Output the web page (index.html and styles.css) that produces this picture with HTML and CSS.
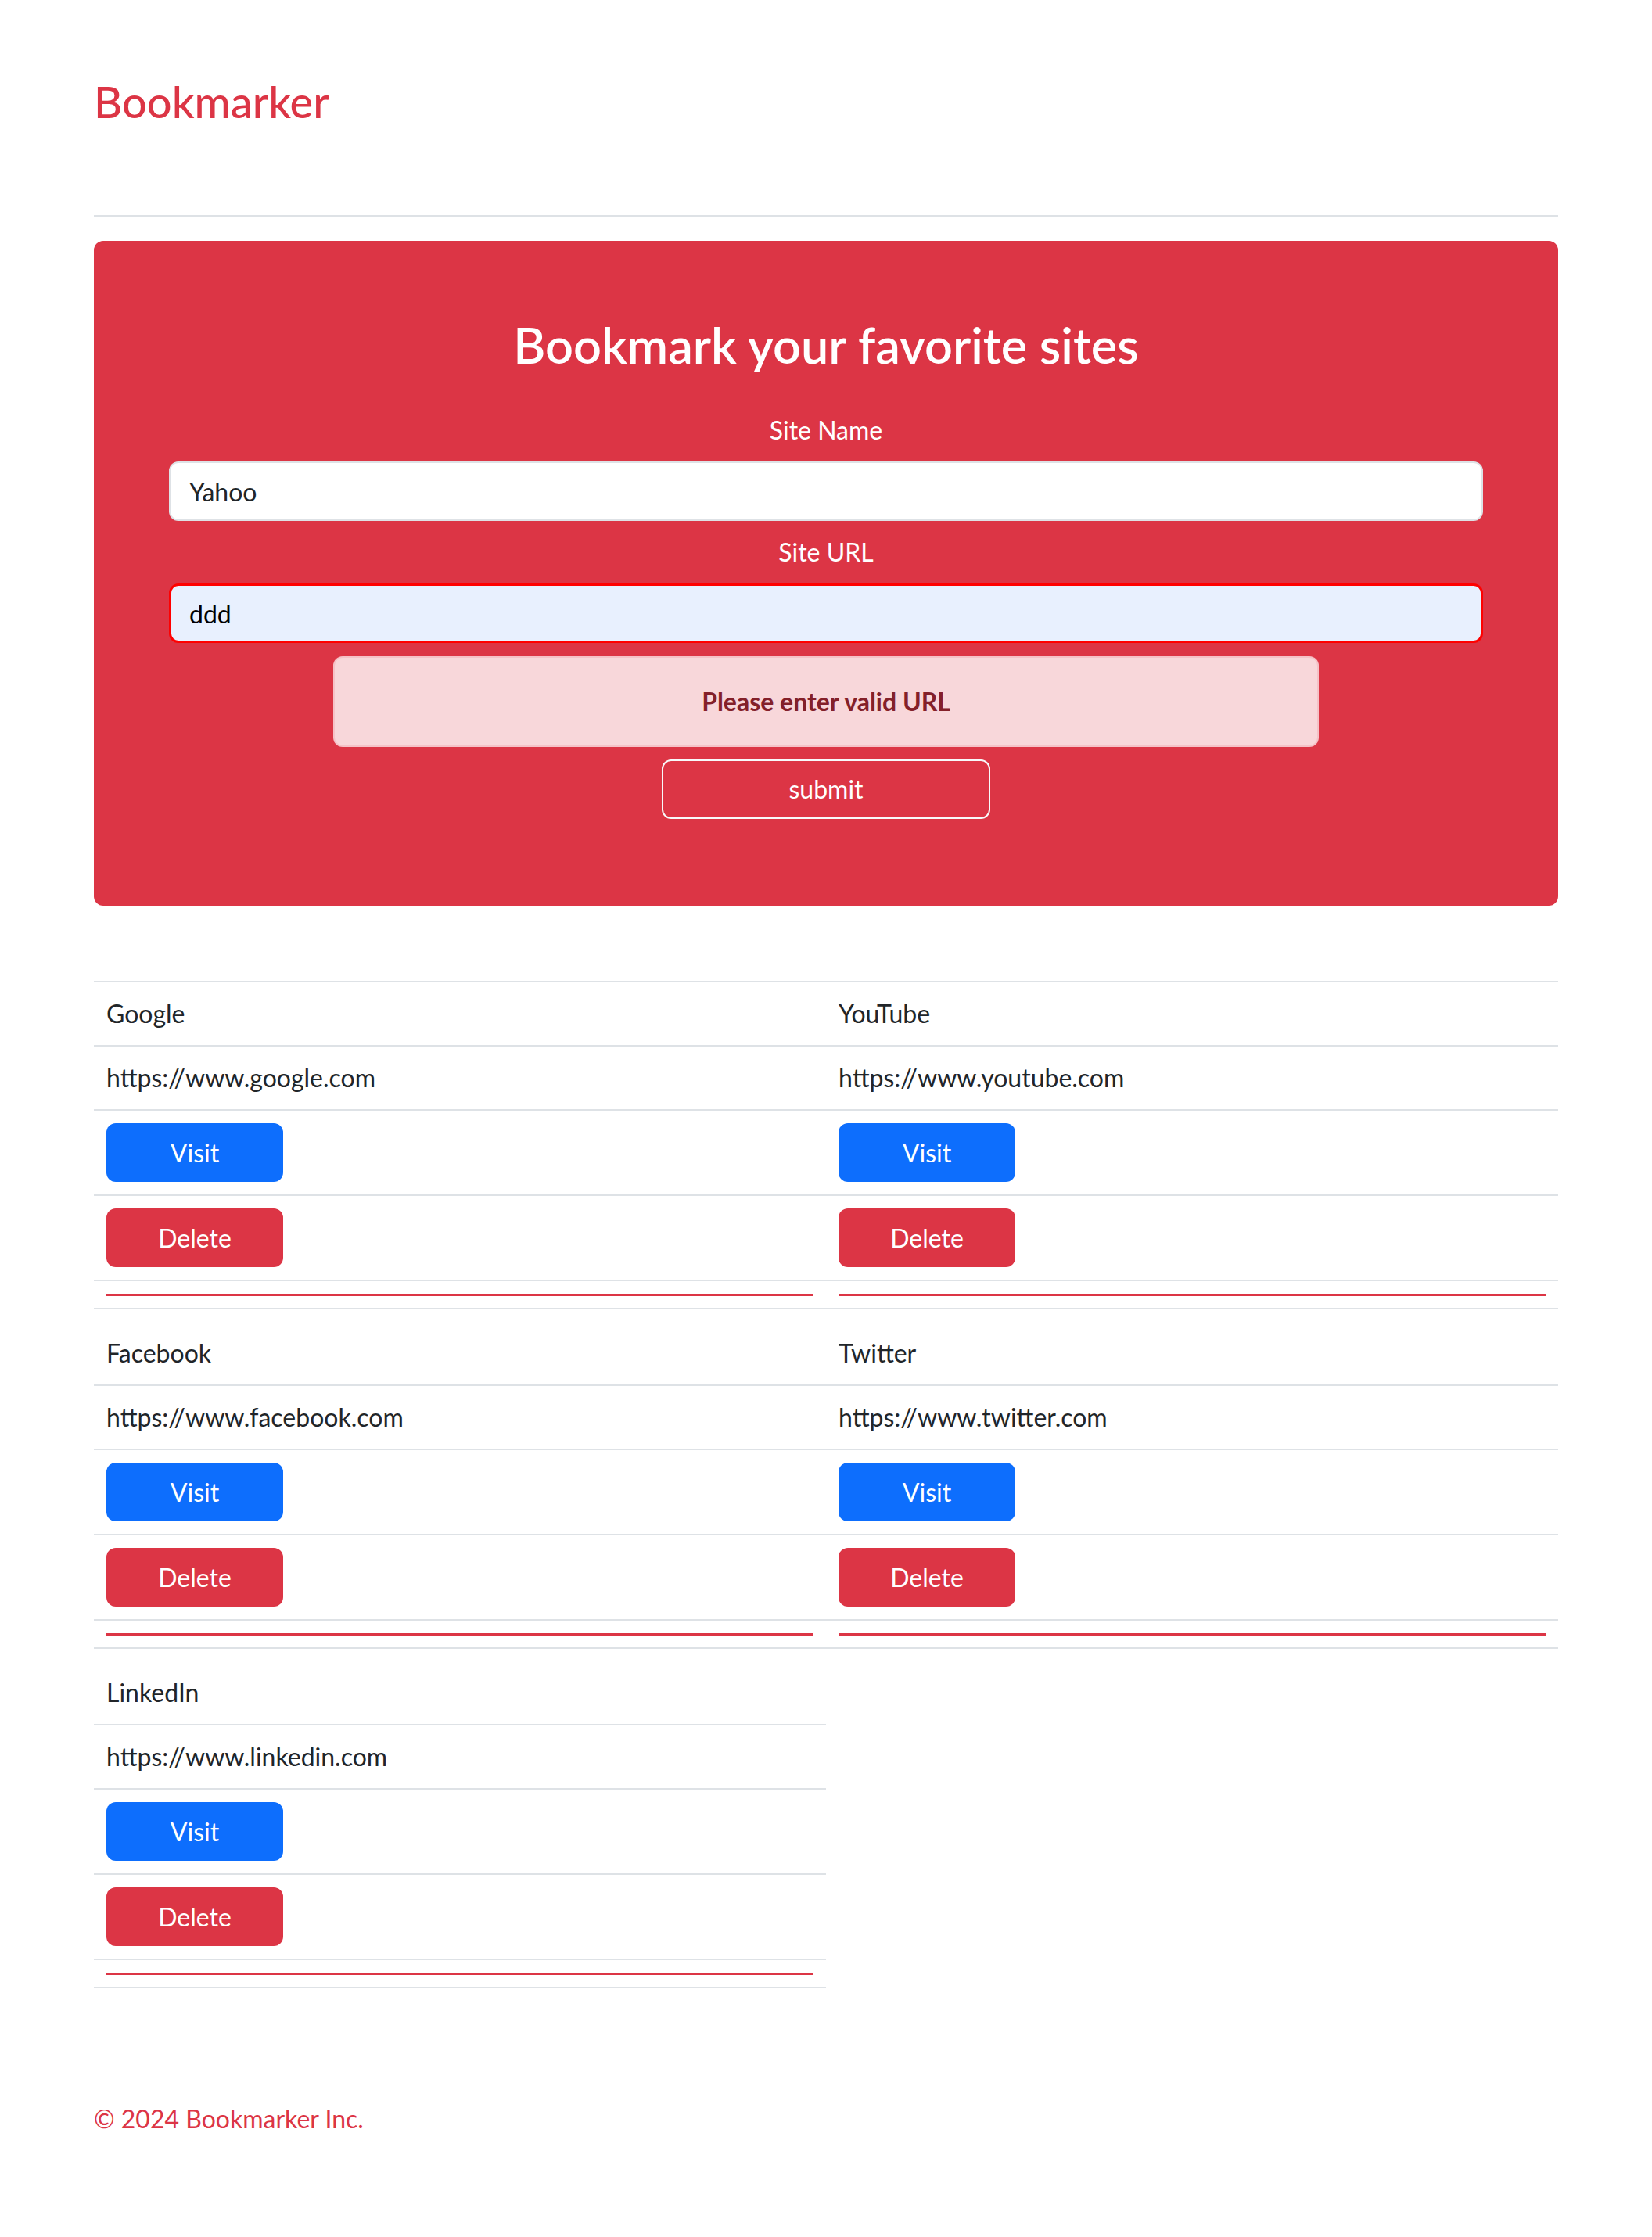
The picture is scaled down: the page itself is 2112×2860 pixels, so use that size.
FILE: index.html
```html
<!DOCTYPE html>
<html lang="en">
<head>
<meta charset="utf-8">
<title>Bookmarker</title>
<link rel="stylesheet" href="styles.css">
</head>
<body>
<div class="container">
  <header class="site-header">
    <h3 class="brand">Bookmarker</h3>
  </header>
  <section class="hero">
    <h2 class="hero-title">Bookmark your favorite sites</h2>
    <form class="bm-form">
      <label class="form-label" for="siteName">Site Name</label>
      <input class="form-control" id="siteName" type="text" value="Yahoo">
      <label class="form-label" for="siteUrl">Site URL</label>
      <input class="form-control is-invalid" id="siteUrl" type="text" value="ddd">
      <div class="alert">Please enter valid URL</div>
      <button type="button" class="btn-submit">submit</button>
    </form>
  </section>
  <div class="bookmarks">
    <div class="bm-group">
      <div class="bm-row bm-text bm-name">Google</div>
      <div class="bm-row bm-text">https://www.google.com</div>
      <div class="bm-row bm-btn"><a class="btn btn-visit" href="#">Visit</a></div>
      <div class="bm-row bm-btn"><button type="button" class="btn btn-delete">Delete</button></div>
      <div class="bm-row bm-hr"><hr class="bm-sep"></div>
    </div>
    <div class="bm-group">
      <div class="bm-row bm-text bm-name">YouTube</div>
      <div class="bm-row bm-text">https://www.youtube.com</div>
      <div class="bm-row bm-btn"><a class="btn btn-visit" href="#">Visit</a></div>
      <div class="bm-row bm-btn"><button type="button" class="btn btn-delete">Delete</button></div>
      <div class="bm-row bm-hr"><hr class="bm-sep"></div>
    </div>
    <div class="bm-group">
      <div class="bm-row bm-text bm-name">Facebook</div>
      <div class="bm-row bm-text">https://www.facebook.com</div>
      <div class="bm-row bm-btn"><a class="btn btn-visit" href="#">Visit</a></div>
      <div class="bm-row bm-btn"><button type="button" class="btn btn-delete">Delete</button></div>
      <div class="bm-row bm-hr"><hr class="bm-sep"></div>
    </div>
    <div class="bm-group">
      <div class="bm-row bm-text bm-name">Twitter</div>
      <div class="bm-row bm-text">https://www.twitter.com</div>
      <div class="bm-row bm-btn"><a class="btn btn-visit" href="#">Visit</a></div>
      <div class="bm-row bm-btn"><button type="button" class="btn btn-delete">Delete</button></div>
      <div class="bm-row bm-hr"><hr class="bm-sep"></div>
    </div>
    <div class="bm-group">
      <div class="bm-row bm-text bm-name">LinkedIn</div>
      <div class="bm-row bm-text">https://www.linkedin.com</div>
      <div class="bm-row bm-btn"><a class="btn btn-visit" href="#">Visit</a></div>
      <div class="bm-row bm-btn"><button type="button" class="btn btn-delete">Delete</button></div>
      <div class="bm-row bm-hr"><hr class="bm-sep"></div>
    </div>
  </div>
  <footer class="footer">© 2024 Bookmarker Inc.</footer>
</div>
</body>
</html>
```
FILE: styles.css
```css
* { box-sizing: border-box; }
html, body { margin: 0; padding: 0; background: #fff; }
body {
  font-family: Lato, "Noto Sans", sans-serif;
  font-size: 32px;
  line-height: 1.5;
  color: #212529;
}
.container {
  width: 1920px;
  margin: 0 auto;
  padding: 0 24px;
}
.site-header {
  padding-top: 96px;
  height: 277px;
  border-bottom: 2px solid #dee2e6;
}
.brand {
  margin: 0;
  font-size: 56px;
  font-weight: 500;
  line-height: 1.2;
  color: #dc3545;
}
.hero {
  margin-top: 31px;
  background: #dc3545;
  border-radius: 12px;
  padding: 96px;
  color: #fff;
  text-align: center;
}
.hero-title {
  margin: 0 0 48px;
  font-size: 63px;
  font-weight: 600;
  line-height: 74px;
}
.bm-form {
  display: flex;
  flex-direction: column;
  align-items: center;
}
.form-label {
  display: block;
  line-height: 48px;
  margin-bottom: 16px;
}
.form-control {
  display: block;
  width: 100%;
  height: 76px;
  padding: 12px 24px;
  font: inherit;
  font-size: 32px;
  color: #212529;
  background: #fff;
  border: 2px solid #dee2e6;
  border-radius: 12px;
  margin-bottom: 16px;
  outline: none;
}
.form-control.is-invalid {
  border: 3px solid #ff0000;
  background: #e8f0fe;
  color: #000;
  padding-left: 23px;
}
.alert {
  width: 75%;
  padding: 32px;
  line-height: 48px;
  background: #f8d7da;
  border: 2px solid #f5c2c7;
  border-radius: 12px;
  color: #842029;
  font-weight: 700;
  margin-top: 1px;
  margin-bottom: 16px;
}
.btn-submit {
  width: 25%;
  height: 76px;
  font: inherit;
  font-size: 32px;
  color: #fff;
  background: transparent;
  border: 2px solid #f8f9fa;
  border-radius: 12px;
  margin-bottom: 15px;
}
.bookmarks {
  margin-top: 96px;
  display: grid;
  grid-template-columns: 1fr 1fr;
}
.bm-group:nth-child(-n+2) { border-top: 2px solid #dee2e6; }
.bm-group:nth-child(n+3) .bm-name { padding-top: 32px; }
.bm-row {
  padding: 16px;
  border-bottom: 2px solid #dee2e6;
}
.bm-text { line-height: 48px; }
.btn {
  display: block;
  width: 25%;
  height: 75px;
  font: inherit;
  font-size: 32px;
  line-height: 75px;
  padding: 0;
  border: 0;
  border-radius: 12px;
  color: #fff;
  text-align: center;
  text-decoration: none;
}
.btn-visit { background: #0d6efd; }
.btn-delete { background: #dc3545; }
.bm-hr { padding-bottom: 15px; }
.bm-sep {
  margin: 0;
  height: 3px;
  border: 0;
  background: #dc3545;
}
.footer {
  margin-top: 143px;
  color: #dc3545;
  line-height: 48px;
}
```
